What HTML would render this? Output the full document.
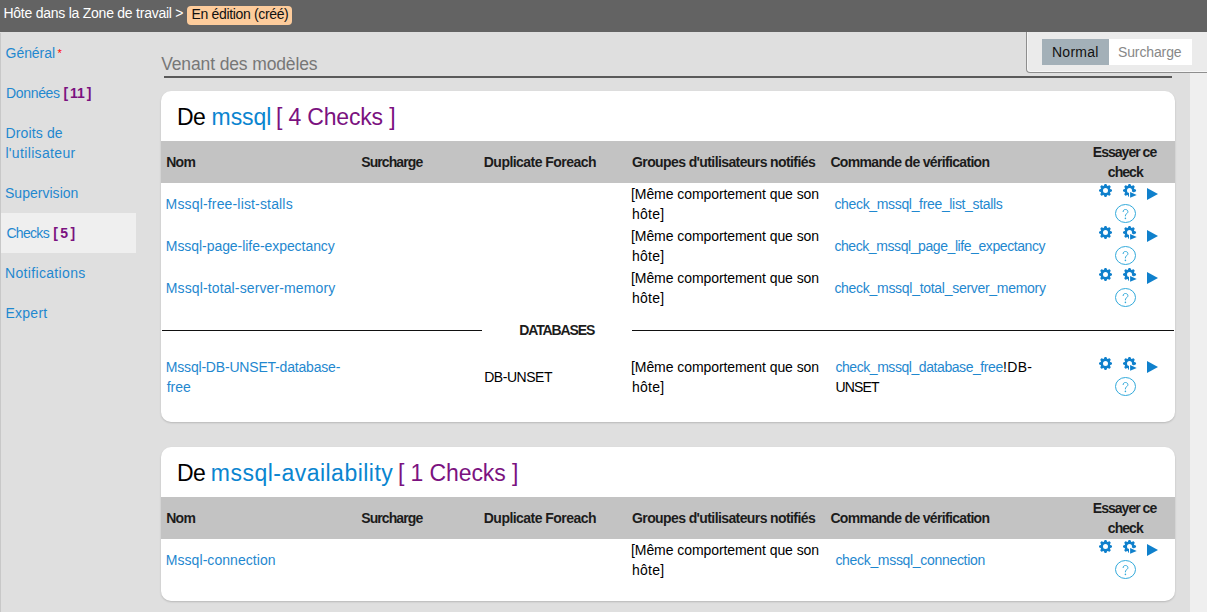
<!DOCTYPE html>
<html><head><meta charset="utf-8">
<style>
*{box-sizing:border-box;margin:0;padding:0}
html,body{width:1207px;height:612px;overflow:hidden;background:#dfdfdf;font-family:"Liberation Sans",sans-serif;color:#000}
.b{position:absolute}
.t{position:absolute;white-space:nowrap;line-height:20px}
.w14{font-size:14px;color:#fff}
.d14{font-size:14px;color:#000}
.l14{font-size:14px;color:#1f88cf}
.ast{font-size:11px;color:#f00;line-height:20px}
.cnt{font-size:14px;font-weight:bold;color:#7b127f}
.ven{font-size:17.5px;color:#777;line-height:24px}
.ttl{font-size:23px;line-height:30px}
.th{font-size:14px;font-weight:bold;color:#1c1c1c}
.ic{position:absolute}
</style></head>
<body>
<svg width="0" height="0" style="position:absolute">
<defs>
<symbol id="gear" viewBox="0 0 13 13"><path fill="#0f80cc" fill-rule="evenodd" d="M4.70 2.05 L5.70 -0.05 L7.30 -0.05 L8.30 2.05 L8.37 2.08 L10.57 1.30 L11.70 2.43 L10.92 4.63 L10.95 4.70 L13.05 5.70 L13.05 7.30 L10.95 8.30 L10.92 8.37 L11.70 10.57 L10.57 11.70 L8.37 10.92 L8.30 10.95 L7.30 13.05 L5.70 13.05 L4.70 10.95 L4.63 10.92 L2.43 11.70 L1.30 10.57 L2.08 8.37 L2.05 8.30 L-0.05 7.30 L-0.05 5.70 L2.05 4.70 L2.08 4.63 L1.30 2.43 L2.43 1.30 L4.63 2.08 Z M4.0 6.5 a2.5 2.5 0 1 0 5.0 0 a2.5 2.5 0 1 0 -5.0 0 Z"/></symbol>
<symbol id="gearplay" viewBox="0 0 15 15"><path fill="#0f80cc" fill-rule="evenodd" d="M4.70 2.05 L5.70 -0.05 L7.30 -0.05 L8.30 2.05 L8.37 2.08 L10.57 1.30 L11.70 2.43 L10.92 4.63 L10.95 4.70 L13.05 5.70 L13.05 7.30 L10.95 8.30 L10.92 8.37 L11.70 10.57 L10.57 11.70 L8.37 10.92 L8.30 10.95 L7.30 13.05 L5.70 13.05 L4.70 10.95 L4.63 10.92 L2.43 11.70 L1.30 10.57 L2.08 8.37 L2.05 8.30 L-0.05 7.30 L-0.05 5.70 L2.05 4.70 L2.08 4.63 L1.30 2.43 L2.43 1.30 L4.63 2.08 Z M4.0 6.5 a2.5 2.5 0 1 0 5.0 0 a2.5 2.5 0 1 0 -5.0 0 Z"/>
<path d="M6.0 6.0 L15.6 10.9 L6.0 15.8 Z" fill="#fff"/><path d="M7.1 8 L13.7 10.9 L7.1 13.8 Z" fill="#0f80cc"/></symbol>
<symbol id="play" viewBox="0 0 11 12"><path d="M0 0 L11 6 L0 12 Z" fill="#0f80cc"/></symbol>
<symbol id="quest" viewBox="0 0 22 20"><ellipse cx="10.5" cy="9.5" rx="10" ry="9" fill="none" stroke="#33aadb" stroke-width="1"/>
<path d="M8.1 8 C8.1 6.2 9.1 5.5 10.5 5.5 C11.9 5.5 12.9 6.4 12.9 7.7 C12.9 9.1 11.6 9.6 10.9 10.3 C10.5 10.7 10.4 11.2 10.4 12.3" fill="none" stroke="#33aadb" stroke-width="1"/>
<circle cx="10.4" cy="14.4" r="0.8" fill="#33aadb"/></symbol>
</defs></svg>

<div class="b" style="left:0;top:0;width:1207px;height:32px;background:#636363"></div>
<div class="b" style="left:187px;top:6px;width:105px;height:19px;background:#fdcc9c;border-radius:4px"></div>
<div class="b" style="left:0;top:33px;width:1px;height:579px;background:#c8c8c8"></div>
<div class="b" style="left:1px;top:213px;width:135px;height:40px;background:#efefef"></div>
<div class="b" style="left:1190px;top:32px;width:17px;height:580px;background:#efefef"></div>
<div class="b" style="left:164px;top:76px;width:1008px;height:2px;background:#5a5a5a"></div>
<div class="b" style="left:1026px;top:32px;width:185px;height:41px;background:#ebebeb;border:1px solid #8e8e8e;border-top:none;border-radius:0 0 4px 4px;box-shadow:inset 1px -1px 0 #f6f6f6"></div>
<div class="b" style="left:1042px;top:39px;width:67px;height:26px;background:#a3b0b8"></div>
<div class="b" style="left:1109px;top:39px;width:83px;height:26px;background:#fff"></div>
<div class="b" style="left:161px;top:91px;width:1014px;height:331px;background:#fff;border-radius:10px;box-shadow:0 1px 2px rgba(0,0,0,0.18)"></div>
<div class="b" style="left:161px;top:141px;width:1014px;height:42px;background:#c3c3c3"></div>
<div class="b" style="left:162px;top:330px;width:320px;height:1px;background:#111"></div>
<div class="b" style="left:632px;top:330px;width:542px;height:1px;background:#111"></div>
<div class="b" style="left:161px;top:447px;width:1014px;height:154px;background:#fff;border-radius:10px;box-shadow:0 1px 2px rgba(0,0,0,0.18)"></div>
<div class="b" style="left:161px;top:497px;width:1014px;height:42px;background:#c3c3c3"></div>
<div id="crumb" class="t w14" style="left:3.40px;top:3px;letter-spacing:-0.242px;">Hôte dans la Zone de travail &gt;</div>
<div id="badge" class="t d14" style="left:191.60px;top:4px;letter-spacing:-0.348px;color:#111">En édition (créé)</div>
<div id="nav_gen" class="t l14" style="left:5.60px;top:43px;letter-spacing:-0.066px;">Général</div>
<div id="nav_ast" class="t ast" style="left:57.60px;top:43px;letter-spacing:1.000px;">*</div>
<div id="nav_don" class="t l14" style="left:6.00px;top:83px;letter-spacing:-0.333px;">Données</div>
<div id="nav_doncnt" class="t cnt" style="left:63.40px;top:83px;word-spacing:-2.000px;">[ 11 ]</div>
<div id="nav_dro1" class="t l14" style="left:5.40px;top:123px;letter-spacing:0.154px;">Droits de</div>
<div id="nav_dro2" class="t l14" style="left:5.40px;top:143px;letter-spacing:0.348px;">l'utilisateur</div>
<div id="nav_sup" class="t l14" style="left:5.00px;top:183px;letter-spacing:0.020px;">Supervision</div>
<div id="nav_chk" class="t l14" style="left:6.40px;top:223px;letter-spacing:-0.680px;">Checks</div>
<div id="nav_chkcnt" class="t cnt" style="left:53.20px;top:223px;word-spacing:-1.500px;">[ 5 ]</div>
<div id="nav_not" class="t l14" style="left:5.00px;top:263px;letter-spacing:0.334px;">Notifications</div>
<div id="nav_exp" class="t l14" style="left:5.40px;top:303px;letter-spacing:0.280px;">Expert</div>
<div id="venant" class="t ven" style="left:161.20px;top:52px;letter-spacing:-0.129px;">Venant des modèles</div>
<div id="tg_norm" class="t d14" style="left:1052.00px;top:42px;letter-spacing:0.240px;color:#111">Normal</div>
<div id="tg_sur" class="t d14" style="left:1118.00px;top:42px;letter-spacing:-0.125px;color:#888">Surcharge</div>
<div id="t1_de" class="t ttl" style="left:177.00px;top:102px;letter-spacing:-0.600px;color:#000">De</div>
<div id="t1_ms" class="t ttl" style="left:211.60px;top:102px;letter-spacing:-0.100px;color:#0a85d0">mssql</div>
<div id="t1_ck" class="t ttl" style="left:276.10px;top:102px;letter-spacing:-0.182px;color:#7b127f">[ 4 Checks ]</div>
<div id="t2_de" class="t ttl" style="left:177.00px;top:458px;letter-spacing:-0.600px;color:#000">De</div>
<div id="t2_ms" class="t ttl" style="left:210.80px;top:458px;letter-spacing:0.482px;color:#0a85d0">mssql-availability</div>
<div id="t2_ck" class="t ttl" style="left:397.90px;top:458px;letter-spacing:-0.091px;color:#7b127f">[ 1 Checks ]</div>
<div id="h1_nom" class="t th" style="left:166.20px;top:152px;letter-spacing:-0.700px;">Nom</div>
<div id="h1_sur" class="t th" style="left:361.20px;top:152px;letter-spacing:-0.900px;">Surcharge</div>
<div id="h1_dup" class="t th" style="left:483.80px;top:152px;letter-spacing:-0.536px;">Duplicate Foreach</div>
<div id="h1_grp" class="t th" style="left:632.00px;top:152px;letter-spacing:-0.600px;">Groupes d'utilisateurs notifiés</div>
<div id="h1_cmd" class="t th" style="left:830.40px;top:152px;letter-spacing:-0.669px;">Commande de vérification</div>
<div id="h1_ess1" class="t th" style="left:1092.80px;top:142px;letter-spacing:-0.979px;">Essayer ce</div>
<div id="h1_ess2" class="t th" style="left:1107.80px;top:162px;letter-spacing:-0.950px;">check</div>
<div id="h2_nom" class="t th" style="left:166.20px;top:508px;letter-spacing:-0.700px;">Nom</div>
<div id="h2_sur" class="t th" style="left:361.20px;top:508px;letter-spacing:-0.900px;">Surcharge</div>
<div id="h2_dup" class="t th" style="left:483.80px;top:508px;letter-spacing:-0.536px;">Duplicate Foreach</div>
<div id="h2_grp" class="t th" style="left:632.00px;top:508px;letter-spacing:-0.600px;">Groupes d'utilisateurs notifiés</div>
<div id="h2_cmd" class="t th" style="left:830.40px;top:508px;letter-spacing:-0.669px;">Commande de vérification</div>
<div id="h2_ess1" class="t th" style="left:1092.80px;top:498px;letter-spacing:-0.979px;">Essayer ce</div>
<div id="h2_ess2" class="t th" style="left:1107.80px;top:518px;letter-spacing:-0.950px;">check</div>
<div id="r1_nom" class="t l14" style="left:165.60px;top:194px;letter-spacing:0.160px;">Mssql-free-list-stalls</div>
<div id="r1_cmd" class="t l14" style="left:834.40px;top:194px;letter-spacing:-0.333px;">check_mssql_free_list_stalls</div>
<div id="r1_g1" class="t d14" style="left:631.00px;top:184px;letter-spacing:-0.072px;">[Même comportement que son</div>
<div id="r1_g2" class="t d14" style="left:632.00px;top:204px;letter-spacing:0.250px;">hôte]</div>
<div id="r2_nom" class="t l14" style="left:165.80px;top:236px;letter-spacing:-0.056px;">Mssql-page-life-expectancy</div>
<div id="r2_cmd" class="t l14" style="left:834.40px;top:236px;letter-spacing:-0.419px;">check_mssql_page_life_expectancy</div>
<div id="r2_g1" class="t d14" style="left:631.00px;top:226px;letter-spacing:-0.072px;">[Même comportement que son</div>
<div id="r2_g2" class="t d14" style="left:632.00px;top:246px;letter-spacing:0.250px;">hôte]</div>
<div id="r3_nom" class="t l14" style="left:165.80px;top:278px;letter-spacing:0.125px;">Mssql-total-server-memory</div>
<div id="r3_cmd" class="t l14" style="left:834.40px;top:278px;letter-spacing:-0.287px;">check_mssql_total_server_memory</div>
<div id="r3_g1" class="t d14" style="left:631.00px;top:268px;letter-spacing:-0.072px;">[Même comportement que son</div>
<div id="r3_g2" class="t d14" style="left:632.00px;top:288px;letter-spacing:0.250px;">hôte]</div>
<div id="c1_nom" class="t l14" style="left:165.80px;top:550px;letter-spacing:0.054px;">Mssql-connection</div>
<div id="c1_cmd" class="t l14" style="left:835.40px;top:550px;letter-spacing:-0.315px;">check_mssql_connection</div>
<div id="c1_g1" class="t d14" style="left:631.00px;top:540px;letter-spacing:-0.072px;">[Même comportement que son</div>
<div id="c1_g2" class="t d14" style="left:632.00px;top:560px;letter-spacing:0.250px;">hôte]</div>
<div id="db_nom1" class="t l14" style="left:165.80px;top:357px;letter-spacing:-0.192px;">Mssql-DB-UNSET-database-</div>
<div id="db_nom2" class="t l14" style="left:166.80px;top:377px;letter-spacing:-0.068px;">free</div>
<div id="db_dup" class="t d14" style="left:484.20px;top:367px;letter-spacing:-0.458px;">DB-UNSET</div>
<div id="db_g1" class="t d14" style="left:631.00px;top:357px;letter-spacing:-0.072px;">[Même comportement que son</div>
<div id="db_g2" class="t d14" style="left:632.00px;top:377px;letter-spacing:0.250px;">hôte]</div>
<div id="db_cmd1" class="t l14" style="left:835.40px;top:357px;letter-spacing:-0.435px;">check_mssql_database_free</div>
<div id="db_cmd1b" class="t d14" style="left:1003.00px;top:357px;letter-spacing:0.333px;">!DB-</div>
<div id="db_cmd2" class="t d14" style="left:835.40px;top:377px;letter-spacing:-0.850px;">UNSET</div>
<div id="databases" class="t th" style="left:519.20px;top:320px;letter-spacing:-1.100px;">DATABASES</div>
<svg class="ic" style="left:1099px;top:184px" width="13" height="13"><use href="#gear"/></svg>
<svg class="ic" style="left:1123px;top:184px" width="15" height="15"><use href="#gearplay"/></svg>
<svg class="ic" style="left:1146.5px;top:188px" width="11" height="12"><use href="#play"/></svg>
<svg class="ic" style="left:1115px;top:204px" width="22" height="20"><use href="#quest"/></svg>
<svg class="ic" style="left:1099px;top:226px" width="13" height="13"><use href="#gear"/></svg>
<svg class="ic" style="left:1123px;top:226px" width="15" height="15"><use href="#gearplay"/></svg>
<svg class="ic" style="left:1146.5px;top:230px" width="11" height="12"><use href="#play"/></svg>
<svg class="ic" style="left:1115px;top:246px" width="22" height="20"><use href="#quest"/></svg>
<svg class="ic" style="left:1099px;top:268px" width="13" height="13"><use href="#gear"/></svg>
<svg class="ic" style="left:1123px;top:268px" width="15" height="15"><use href="#gearplay"/></svg>
<svg class="ic" style="left:1146.5px;top:272px" width="11" height="12"><use href="#play"/></svg>
<svg class="ic" style="left:1115px;top:288px" width="22" height="20"><use href="#quest"/></svg>
<svg class="ic" style="left:1099px;top:357px" width="13" height="13"><use href="#gear"/></svg>
<svg class="ic" style="left:1123px;top:357px" width="15" height="15"><use href="#gearplay"/></svg>
<svg class="ic" style="left:1146.5px;top:361px" width="11" height="12"><use href="#play"/></svg>
<svg class="ic" style="left:1115px;top:377px" width="22" height="20"><use href="#quest"/></svg>
<svg class="ic" style="left:1099px;top:540px" width="13" height="13"><use href="#gear"/></svg>
<svg class="ic" style="left:1123px;top:540px" width="15" height="15"><use href="#gearplay"/></svg>
<svg class="ic" style="left:1146.5px;top:544px" width="11" height="12"><use href="#play"/></svg>
<svg class="ic" style="left:1115px;top:560px" width="22" height="20"><use href="#quest"/></svg>

</body></html>
